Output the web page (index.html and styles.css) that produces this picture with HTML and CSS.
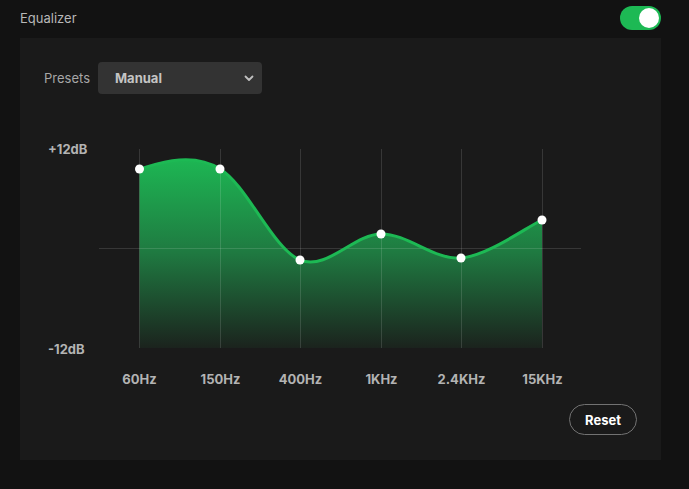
FILE: index.html
```html
<!DOCTYPE html>
<html lang="en">
<head>
<meta charset="utf-8">
<title>Equalizer</title>
<link rel="stylesheet" href="styles.css">
</head>
<body>
<div class="header">
  <span class="title">Equalizer</span>
  <div class="toggle" role="switch" aria-checked="true"><span class="knob"></span></div>
</div>
<section class="panel">
  <div class="presets">
    <span class="presets-label">Presets</span>
    <div class="select">
      <span class="select-value">Manual</span>
      <svg class="chev" width="10" height="7" viewBox="0 0 10 7"><path d="M1.5 1.5 L5 5 L8.5 1.5" fill="none" stroke="#c0c0c0" stroke-width="1.8" stroke-linecap="round" stroke-linejoin="round"/></svg>
    </div>
  </div>
  <svg class="chart" width="593" height="280" viewBox="44 120 593 280">
    <defs>
      <linearGradient id="fillGrad" gradientUnits="userSpaceOnUse" x1="0" y1="155" x2="0" y2="349">
        <stop offset="0" stop-color="#1db954"/>
        <stop offset="0.5" stop-color="#1f7a41"/>
        <stop offset="1" stop-color="#1b221d"/>
      </linearGradient>
    </defs>
    <path class="area" d="M139.5,169 C153,165.5 190,150 220,169 C247,185 273,249 300,260 C327,271 354,234 381,234 C408,233.7 434,260.3 461,258 C488,255.7 528,226.3 542,220 L542,348 L139.5,348 Z"/>
    <g class="grid">
      <line x1="139.5" y1="149" x2="139.5" y2="348"/>
      <line x1="220.5" y1="149" x2="220.5" y2="348"/>
      <line x1="300.5" y1="149" x2="300.5" y2="348"/>
      <line x1="381.5" y1="149" x2="381.5" y2="348"/>
      <line x1="461.5" y1="149" x2="461.5" y2="348"/>
      <line x1="542.5" y1="149" x2="542.5" y2="348"/>
      <line x1="99" y1="248.5" x2="581" y2="248.5"/>
    </g>
    <path class="curve" d="M139.5,169 C153,165.5 190,150 220,169 C247,185 273,249 300,260 C327,271 354,234 381,234 C408,233.7 434,260.3 461,258 C488,255.7 528,226.3 542,220"/>
    <g class="dots">
      <circle cx="139.5" cy="169" r="4.5"/>
      <circle cx="220" cy="169" r="4.5"/>
      <circle cx="300" cy="260" r="4.5"/>
      <circle cx="381" cy="234" r="4.5"/>
      <circle cx="461" cy="258" r="4.5"/>
      <circle cx="542" cy="220" r="4.5"/>
    </g>
    <g class="axis">
      <text x="48" y="154">+12dB</text>
      <text x="48" y="354">-12dB</text>
    </g>
    <g class="axis xaxis">
      <text x="139.5" y="384">60Hz</text>
      <text x="220.5" y="384">150Hz</text>
      <text x="300.5" y="384">400Hz</text>
      <text x="381.5" y="384">1KHz</text>
      <text x="461.5" y="384">2.4KHz</text>
      <text x="542.5" y="384">15KHz</text>
    </g>
  </svg>
  <div class="actions">
    <button class="reset" type="button">Reset</button>
  </div>
</section>
</body>
</html>
```
FILE: styles.css
```css
html, body {
  margin: 0;
  padding: 0;
}
body {
  background: #121212;
  font-family: Inter, "Noto Sans", "Liberation Sans", sans-serif;
  width: 689px;
  height: 489px;
  overflow: hidden;
}
.header {
  display: flex;
  justify-content: space-between;
  align-items: center;
  height: 36px;
  margin-bottom: 2px;
  padding: 0 28px 0 20px;
}
.title {
  color: #b8b8b8;
  font-size: 13px;
}
.toggle {
  width: 41px;
  height: 24px;
  border-radius: 12px;
  background: #1db954;
  box-sizing: border-box;
  padding: 2px;
  display: flex;
  justify-content: flex-end;
}
.knob {
  width: 20px;
  height: 20px;
  border-radius: 50%;
  background: #ffffff;
}
.panel {
  margin: 0 28px 0 20px;
  height: 422px;
  box-sizing: border-box;
  background: #1a1a1a;
  padding: 24px 24px 0 24px;
  display: flex;
  flex-direction: column;
}
.presets {
  display: flex;
  align-items: center;
  gap: 8px;
  height: 32px;
}
.presets-label {
  color: #a7a7a7;
  font-size: 13px;
}
.select {
  width: 164px;
  height: 32px;
  box-sizing: border-box;
  background: #333333;
  border-radius: 4px;
  display: flex;
  align-items: center;
  justify-content: space-between;
  padding: 0 8px 0 17px;
}
.select-value {
  color: #c4c4c4;
  font-size: 13px;
  font-weight: 700;
}
.chev {
  display: block;
}
.chart {
  display: block;
  margin-top: 26px;
}
.grid line {
  stroke: rgba(255, 255, 255, 0.13);
  stroke-width: 1;
}
.area {
  fill: url(#fillGrad);
}
.curve {
  fill: none;
  stroke: #1db954;
  stroke-width: 3;
  stroke-linecap: round;
}
.dots circle {
  fill: #ffffff;
}
.axis text {
  fill: #b3b3b3;
  font-family: Inter, "Noto Sans", "Liberation Sans", sans-serif;
  font-size: 13px;
  font-weight: 700;
}
.xaxis text {
  text-anchor: middle;
}
.actions {
  display: flex;
  justify-content: flex-end;
  margin-top: 4px;
}
.reset {
  width: 68px;
  height: 31px;
  border-radius: 16px;
  border: 1px solid #727272;
  background: transparent;
  color: #ffffff;
  font-family: Inter, "Noto Sans", "Liberation Sans", sans-serif;
  font-size: 13px;
  font-weight: 700;
  padding: 0;
  cursor: pointer;
}
```
